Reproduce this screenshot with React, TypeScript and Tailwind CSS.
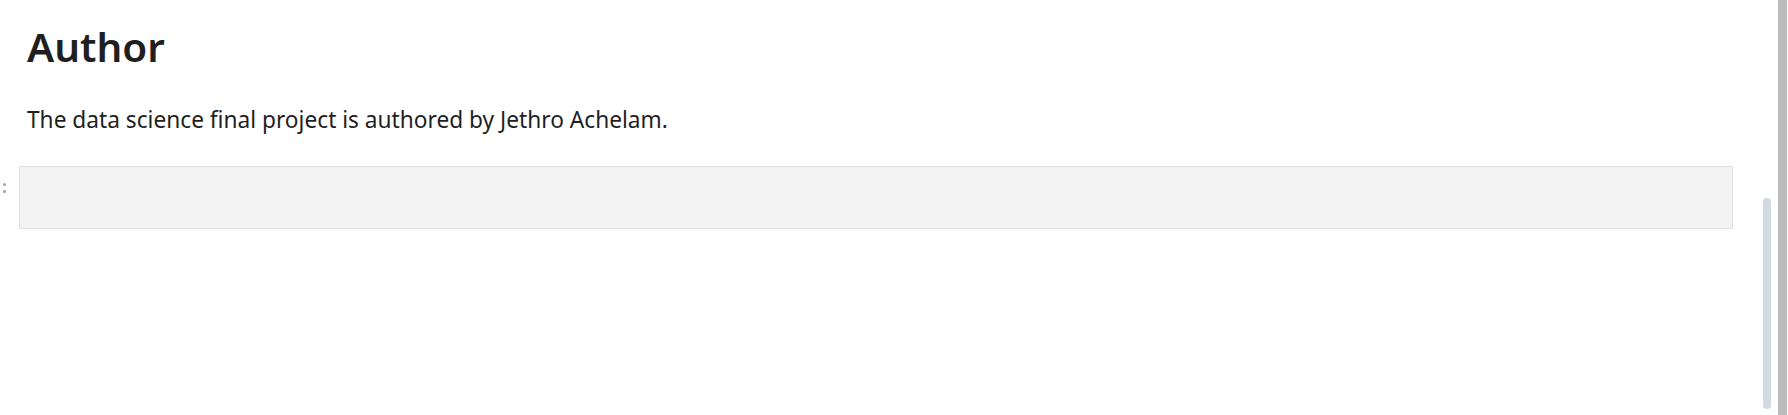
const App = () => {
  return (
    <div className="flex h-[415px] w-[1788px] overflow-hidden bg-white font-['Noto_Sans',sans-serif] text-[#1f1f1f]">
      <div className="relative flex-1">
        <div className="pl-[27px] pt-[19px]">
          <h1 className="text-[40.5px] font-semibold leading-[56px]">Author</h1>
          <p className="mt-[29px] text-[22.7px] leading-[32px]">
            The data science final project is authored by Jethro Achelam.
          </p>
        </div>

        <div className="mt-[30px] flex items-start">
          <div className="flex w-[19px] flex-col gap-[4px] pl-[3px] pt-[17px]">
            <span className="h-[3px] w-[3px] rounded-full bg-[#a0a0a0]"></span>
            <span className="h-[3px] w-[3px] rounded-full bg-[#a0a0a0]"></span>
          </div>
          <div className="h-[63px] w-[1714px] border border-[#e0e0e0] bg-[#f3f3f3]"></div>
        </div>

        {/* overlay scroll thumb */}
        <div className="absolute left-[1763px] top-[198px] h-[211px] w-[8px] rounded-full bg-[#cfdae3]"></div>
      </div>

      <div className="w-[9px] bg-[#bcbcbc]"></div>
      <div className="w-[1px] bg-white"></div>
    </div>
  );
};

export default App;
